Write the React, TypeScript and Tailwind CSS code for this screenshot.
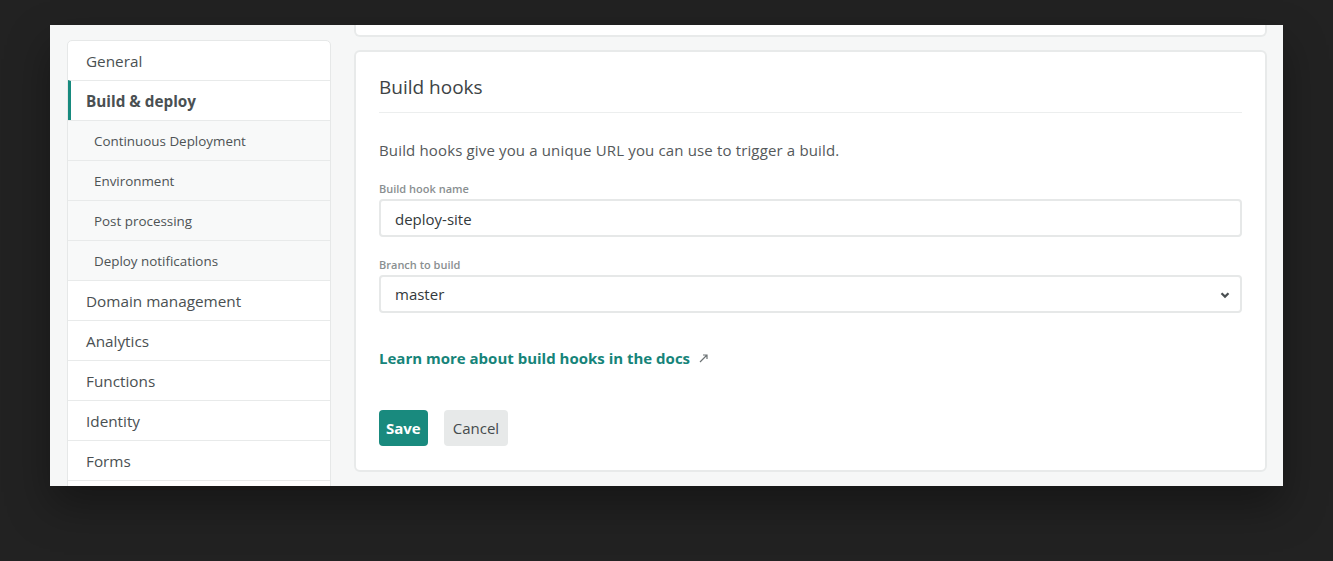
import React from "react";

const font = { fontFamily: '"Open Sans", "Noto Sans", sans-serif' };

const navItems: { label: string; sub?: boolean; active?: boolean }[] = [
  { label: "General" },
  { label: "Build & deploy", active: true },
  { label: "Continuous Deployment", sub: true },
  { label: "Environment", sub: true },
  { label: "Post processing", sub: true },
  { label: "Deploy notifications", sub: true },
  { label: "Domain management" },
  { label: "Analytics" },
  { label: "Functions" },
  { label: "Identity" },
  { label: "Forms" },
  // next row only peeks in at the bottom edge
  { label: "" },
];

function Sidebar() {
  return (
    <nav className="w-[264px] shrink-0 self-start overflow-hidden rounded-t-[5px] border border-[#e6e8e8] bg-white">
      {navItems.map((item, i) => (
        <div
          key={i}
          className={
            "flex items-center pt-[2px] " +
            (i > 0 ? "h-[40px] border-t border-[#e8eaea] " : "h-[39px] ") +
            (item.sub
              ? "bg-[#f8f9f9] pl-[26px] text-[13.4px] text-[#4d5355]"
              : "pl-[18px] text-[15.3px] text-[#4a5052]") +
            (item.active ? " border-l-[3px] border-l-[#178a7e] !pl-[15px] font-bold" : "")
          }
        >
          {item.label}
        </div>
      ))}
    </nav>
  );
}

function Field({ label, children }: { label: string; children: React.ReactNode }) {
  return (
    <div>
      <div className="mb-[3px] text-[11px] font-semibold leading-[14px] text-[#8a8f91]">{label}</div>
      {children}
    </div>
  );
}

function BuildHooks() {
  return (
    <div className="rounded-[6px] border-2 border-[#e8eaea] bg-white px-[23px] pb-[24px] pt-[22px]">
      <h2 className="border-b border-[#eceeee] pb-[12px] text-[19px] font-normal leading-[26px] text-[#3d4345]">
        Build hooks
      </h2>
      <p className="mt-[25px] text-[15px] leading-[24px] tracking-[0.15px] text-[#55595b]">
        Build hooks give you a unique URL you can use to trigger a build.
      </p>
      <div className="mt-[20px] flex flex-col gap-[21px]">
        <Field label="Build hook name">
          <div className="flex h-[38px] items-center rounded-[4px] border-2 border-[#e6e8e8] px-[14px] pt-[2px] text-[15px] text-[#33393b]">
            deploy-site
          </div>
        </Field>
        <Field label="Branch to build">
          <div className="flex h-[38px] items-center justify-between rounded-[4px] border-2 border-[#e6e8e8] pl-[14px] pr-[10px] pt-[1px] text-[15px] text-[#33393b]">
            <span>master</span>
            <svg width="10" height="8" viewBox="0 0 10 8" className="text-[#4a4f51]">
              <path d="M1.5 2.2 L5 5.6 L8.5 2.2" fill="none" stroke="currentColor" strokeWidth="2.2" />
            </svg>
          </div>
        </Field>
      </div>
      <div className="mt-[33px] flex items-center gap-[8px] text-[15px] font-bold leading-[24px] text-[#168479]">
        <span>Learn more about build hooks in the docs</span>
        <svg width="11" height="11" viewBox="0 0 11 11" className="text-[#6d7375]">
          <path d="M2 9 L9 2 M5 2 H9 V6" fill="none" stroke="currentColor" strokeWidth="1.2" />
        </svg>
      </div>
      <div className="mt-[40px] flex gap-[16px]">
        <button className="h-[36px] rounded-[4px] bg-[#198a7e] px-[7px] text-[15px] font-bold text-white">Save</button>
        <button className="h-[36px] rounded-[4px] bg-[#e7e9e9] px-[9px] text-[15px] font-medium text-[#454b4d]">Cancel</button>
      </div>
    </div>
  );
}

export default function App() {
  return (
    <div style={font} className="h-[561px] w-[1333px] overflow-hidden bg-[#222222] pl-[50px] pt-[25px]">
      <div className="flex h-[461px] w-[1233px] gap-[23px] overflow-hidden bg-[#f6f7f7] pl-[17px] pr-[16px] pt-[15px] shadow-[0_20px_40px_rgba(0,0,0,0.35)]">
        <Sidebar />
        <div className="flex min-w-0 flex-1 flex-col gap-[13px] -mt-[15px]">
          <div className="h-[12px] rounded-b-[6px] border-2 border-t-0 border-[#e8eaea] bg-white" />
          <BuildHooks />
        </div>
      </div>
    </div>
  );
}
